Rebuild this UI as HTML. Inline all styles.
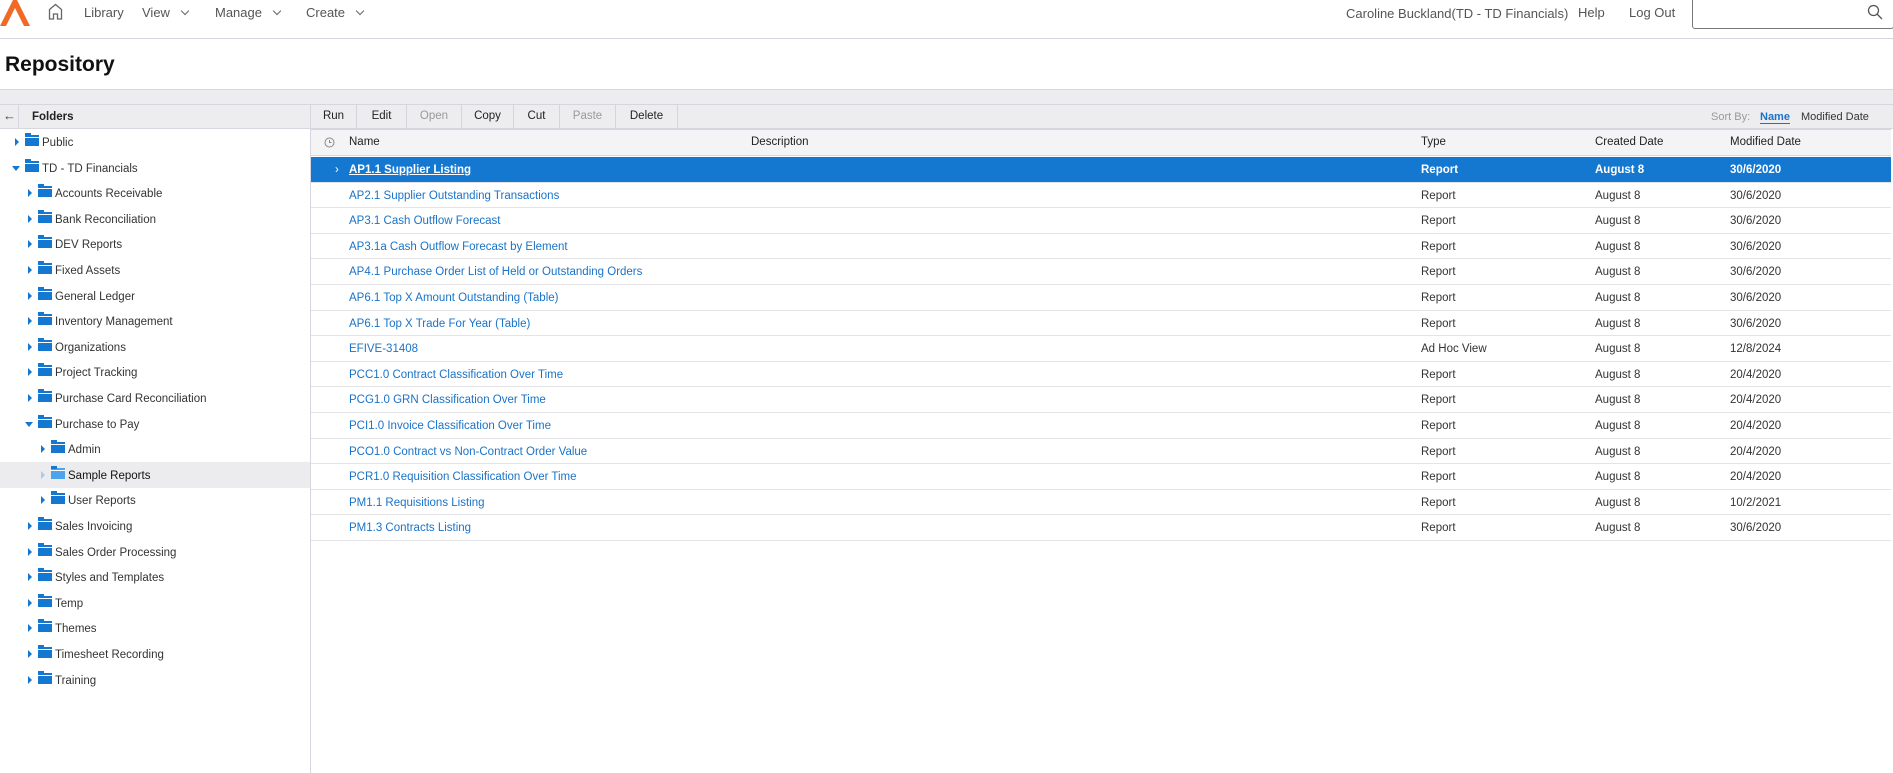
<!DOCTYPE html>
<html><head><meta charset="utf-8"><style>
*{box-sizing:border-box;margin:0;padding:0}
body{width:1893px;height:773px;overflow:hidden;background:#fff;font-family:"Liberation Sans",sans-serif;color:#333;position:relative;font-size:11.5px}
.a{position:absolute;white-space:nowrap}
.nav{font-size:13px;color:#555}
.tb{position:absolute;top:104px;height:25px;line-height:25px;font-size:11.5px;text-align:center;border-right:1px solid #d6d6da;color:#222}
.row{position:absolute;left:311px;width:1580px;height:25.6px;border-bottom:1px solid #e3e3e8;line-height:26px;font-size:11.5px}
.row span{position:absolute}
.n{left:38px;color:#1a73c8}
.t{left:1110px}.c{left:1284px}.m{left:1419px}
.sel{background:#1477d0;color:#fff;font-weight:bold}
.sel .n{color:#fff;text-decoration:underline}
.f{position:absolute;height:25.6px;line-height:28px;font-size:11.5px;color:#333;white-space:nowrap}
.f i{position:absolute;top:9px;width:0;height:0;border-top:4px solid transparent;border-bottom:4px solid transparent;border-left:4px solid #1477d0}
.f i.d{top:11px;border-left:4px solid transparent;border-right:4px solid transparent;border-top:5px solid #1477d0;border-bottom:0}
.f b{position:absolute;top:6px;width:14px;height:11px;background:#1477d0;border-top:2px solid #1477d0}
.f b:before{content:"";position:absolute;left:0;top:-4px;width:6px;height:3px;background:#1477d0}
.f b:after{content:"";position:absolute;left:0;top:0;width:14px;height:1px;background:#fff}
.ch{display:inline-block;width:6px;height:6px;border-right:1.3px solid #666;border-bottom:1.3px solid #666;transform:rotate(45deg);margin-left:12px;position:relative;top:-3px}
</style></head><body>
<svg class="a" style="left:0;top:0" width="30" height="26" viewBox="0 0 30 26"><path d="M0 26 L13 0 L17 0 L30 26 L24 26 L15 8 L6 26Z" fill="#f06a25"/></svg>
<svg class="a" style="left:48px;top:3px" width="15" height="17" viewBox="0 0 15 17"><path d="M1.5 16V6.5L7.5 1.5L13.5 6.5V16H9.5V11H5.5V16Z" fill="none" stroke="#666" stroke-width="1.3"/></svg>
<div class="a nav" style="left:84px;top:5px">Library</div>
<div class="a nav" style="left:142px;top:5px">View<span class="ch"></span></div>
<div class="a nav" style="left:215px;top:5px">Manage<span class="ch"></span></div>
<div class="a nav" style="left:306px;top:5px">Create<span class="ch"></span></div>
<div class="a nav" style="left:1346px;top:6px">Caroline Buckland(TD - TD Financials)</div>
<div class="a nav" style="left:1578px;top:5px">Help</div>
<div class="a nav" style="left:1629px;top:5px">Log Out</div>
<div class="a" style="left:1692px;top:-2px;width:202px;height:31px;border:1px solid #777;border-radius:3px"></div>
<svg class="a" style="left:1867px;top:4px" width="16" height="16" viewBox="0 0 16 16"><circle cx="6.5" cy="6.5" r="5" fill="none" stroke="#555" stroke-width="1.3"/><path d="M10 10L15 15" stroke="#555" stroke-width="1.3"/></svg>
<div class="a" style="left:0;top:38px;width:1893px;height:1px;background:#d6d6de"></div>
<div class="a" style="left:5px;top:53px;font-size:21px;font-weight:bold;color:#111">Repository</div>
<div class="a" style="left:0;top:89px;width:1893px;height:40px;background:#ededf0;border-top:1px solid #d6d6de;border-bottom:1px solid #d6d6de"></div>
<div class="a" style="left:0;top:104px;width:1893px;height:1px;background:#d6d6de"></div>
<div class="a" style="left:310px;top:104px;width:1px;height:669px;background:#d6d6de"></div>
<div class="a" style="left:18px;top:104px;width:1px;height:25px;background:#d6d6de"></div>
<div class="a" style="left:3px;top:108px;font-size:13px;color:#444">←</div>
<div class="a" style="left:32px;top:111px;font-weight:bold;font-size:11.5px;color:#222">Folders</div>
<div class="tb" style="left:311px;width:46px">Run</div>
<div class="tb" style="left:357px;width:50px">Edit</div>
<div class="tb" style="left:407px;width:55px;color:#999">Open</div>
<div class="tb" style="left:462px;width:52px">Copy</div>
<div class="tb" style="left:514px;width:46px">Cut</div>
<div class="tb" style="left:560px;width:56px;color:#999">Paste</div>
<div class="tb" style="left:616px;width:62px">Delete</div>
<div class="a" style="left:1711px;top:111px;font-size:11px;color:#999">Sort By:</div>
<div class="a" style="left:1760px;top:111px;font-size:11px;color:#1a73c8;font-weight:bold;border-bottom:1px solid #1a73c8">Name</div>
<div class="a" style="left:1801px;top:111px;font-size:11px;color:#333">Modified Date</div>
<div class="a" style="left:311px;top:129px;width:1580px;height:27px;background:#f4f4f6;border-top:1px solid #d6d6de;border-bottom:1px solid #d6d6de"></div>
<svg class="a" style="left:324px;top:137px" width="11" height="11" viewBox="0 0 11 11"><circle cx="5.5" cy="5.5" r="4.5" fill="none" stroke="#888"/><path d="M5.5 3V5.5H7.5" fill="none" stroke="#888"/></svg>
<div class="a" style="left:349px;top:136px;color:#222">Name</div>
<div class="a" style="left:751px;top:136px;color:#222">Description</div>
<div class="a" style="left:1421px;top:136px;color:#222">Type</div>
<div class="a" style="left:1595px;top:136px;color:#222">Created Date</div>
<div class="a" style="left:1730px;top:136px;color:#222">Modified Date</div>
<div class="row sel" style="top:157px"><span style="left:24px;font-weight:normal">›</span><span class="n">AP1.1 Supplier Listing</span><span class="t">Report</span><span class="c">August 8</span><span class="m">30/6/2020</span></div>
<div class="row" style="top:182.6px"><span class="n">AP2.1 Supplier Outstanding Transactions</span><span class="t">Report</span><span class="c">August 8</span><span class="m">30/6/2020</span></div>
<div class="row" style="top:208.2px"><span class="n">AP3.1 Cash Outflow Forecast</span><span class="t">Report</span><span class="c">August 8</span><span class="m">30/6/2020</span></div>
<div class="row" style="top:233.8px"><span class="n">AP3.1a Cash Outflow Forecast by Element</span><span class="t">Report</span><span class="c">August 8</span><span class="m">30/6/2020</span></div>
<div class="row" style="top:259.4px"><span class="n">AP4.1 Purchase Order List of Held or Outstanding Orders</span><span class="t">Report</span><span class="c">August 8</span><span class="m">30/6/2020</span></div>
<div class="row" style="top:285px"><span class="n">AP6.1 Top X Amount Outstanding (Table)</span><span class="t">Report</span><span class="c">August 8</span><span class="m">30/6/2020</span></div>
<div class="row" style="top:310.6px"><span class="n">AP6.1 Top X Trade For Year (Table)</span><span class="t">Report</span><span class="c">August 8</span><span class="m">30/6/2020</span></div>
<div class="row" style="top:336.2px"><span class="n">EFIVE-31408</span><span class="t">Ad Hoc View</span><span class="c">August 8</span><span class="m">12/8/2024</span></div>
<div class="row" style="top:361.8px"><span class="n">PCC1.0 Contract Classification Over Time</span><span class="t">Report</span><span class="c">August 8</span><span class="m">20/4/2020</span></div>
<div class="row" style="top:387.4px"><span class="n">PCG1.0 GRN Classification Over Time</span><span class="t">Report</span><span class="c">August 8</span><span class="m">20/4/2020</span></div>
<div class="row" style="top:413px"><span class="n">PCI1.0 Invoice Classification Over Time</span><span class="t">Report</span><span class="c">August 8</span><span class="m">20/4/2020</span></div>
<div class="row" style="top:438.6px"><span class="n">PCO1.0 Contract vs Non-Contract Order Value</span><span class="t">Report</span><span class="c">August 8</span><span class="m">20/4/2020</span></div>
<div class="row" style="top:464.2px"><span class="n">PCR1.0 Requisition Classification Over Time</span><span class="t">Report</span><span class="c">August 8</span><span class="m">20/4/2020</span></div>
<div class="row" style="top:489.8px"><span class="n">PM1.1 Requisitions Listing</span><span class="t">Report</span><span class="c">August 8</span><span class="m">10/2/2021</span></div>
<div class="row" style="top:515.4px"><span class="n">PM1.3 Contracts Listing</span><span class="t">Report</span><span class="c">August 8</span><span class="m">30/6/2020</span></div>
<div class="a" style="left:0;top:462px;width:310px;height:26px;background:#ececef"></div>
<div class="f" style="left:0;top:129px;width:300px"><i style="left:15px"></i><b style="left:25px"></b><span style="position:absolute;left:42px">Public</span></div>
<div class="f" style="left:0;top:154.6px;width:300px"><i class="d" style="left:12px"></i><b style="left:25px"></b><span style="position:absolute;left:42px">TD - TD Financials</span></div>
<div class="f" style="left:0;top:180.2px"><i style="left:28px"></i><b style="left:38px"></b><span style="position:absolute;left:55px">Accounts Receivable</span></div>
<div class="f" style="left:0;top:205.8px"><i style="left:28px"></i><b style="left:38px"></b><span style="position:absolute;left:55px">Bank Reconciliation</span></div>
<div class="f" style="left:0;top:231.4px"><i style="left:28px"></i><b style="left:38px"></b><span style="position:absolute;left:55px">DEV Reports</span></div>
<div class="f" style="left:0;top:257px"><i style="left:28px"></i><b style="left:38px"></b><span style="position:absolute;left:55px">Fixed Assets</span></div>
<div class="f" style="left:0;top:282.6px"><i style="left:28px"></i><b style="left:38px"></b><span style="position:absolute;left:55px">General Ledger</span></div>
<div class="f" style="left:0;top:308.2px"><i style="left:28px"></i><b style="left:38px"></b><span style="position:absolute;left:55px">Inventory Management</span></div>
<div class="f" style="left:0;top:333.8px"><i style="left:28px"></i><b style="left:38px"></b><span style="position:absolute;left:55px">Organizations</span></div>
<div class="f" style="left:0;top:359.4px"><i style="left:28px"></i><b style="left:38px"></b><span style="position:absolute;left:55px">Project Tracking</span></div>
<div class="f" style="left:0;top:385px"><i style="left:28px"></i><b style="left:38px"></b><span style="position:absolute;left:55px">Purchase Card Reconciliation</span></div>
<div class="f" style="left:0;top:410.6px"><i class="d" style="left:25px"></i><b style="left:38px"></b><span style="position:absolute;left:55px">Purchase to Pay</span></div>
<div class="f" style="left:0;top:436.2px"><i style="left:41px"></i><b style="left:51px"></b><span style="position:absolute;left:68px">Admin</span></div>
<div class="f" style="left:0;top:461.8px"><i style="left:41px;border-left-color:#a9cbea"></i><b style="left:51px;background:#4da3ec;border-top-color:#4da3ec"></b><span style="position:absolute;left:68px;color:#111">Sample Reports</span></div>
<div class="f" style="left:0;top:487.4px"><i style="left:41px"></i><b style="left:51px"></b><span style="position:absolute;left:68px">User Reports</span></div>
<div class="f" style="left:0;top:513px"><i style="left:28px"></i><b style="left:38px"></b><span style="position:absolute;left:55px">Sales Invoicing</span></div>
<div class="f" style="left:0;top:538.6px"><i style="left:28px"></i><b style="left:38px"></b><span style="position:absolute;left:55px">Sales Order Processing</span></div>
<div class="f" style="left:0;top:564.2px"><i style="left:28px"></i><b style="left:38px"></b><span style="position:absolute;left:55px">Styles and Templates</span></div>
<div class="f" style="left:0;top:589.8px"><i style="left:28px"></i><b style="left:38px"></b><span style="position:absolute;left:55px">Temp</span></div>
<div class="f" style="left:0;top:615.4px"><i style="left:28px"></i><b style="left:38px"></b><span style="position:absolute;left:55px">Themes</span></div>
<div class="f" style="left:0;top:641px"><i style="left:28px"></i><b style="left:38px"></b><span style="position:absolute;left:55px">Timesheet Recording</span></div>
<div class="f" style="left:0;top:666.6px"><i style="left:28px"></i><b style="left:38px"></b><span style="position:absolute;left:55px">Training</span></div>
</body></html>
